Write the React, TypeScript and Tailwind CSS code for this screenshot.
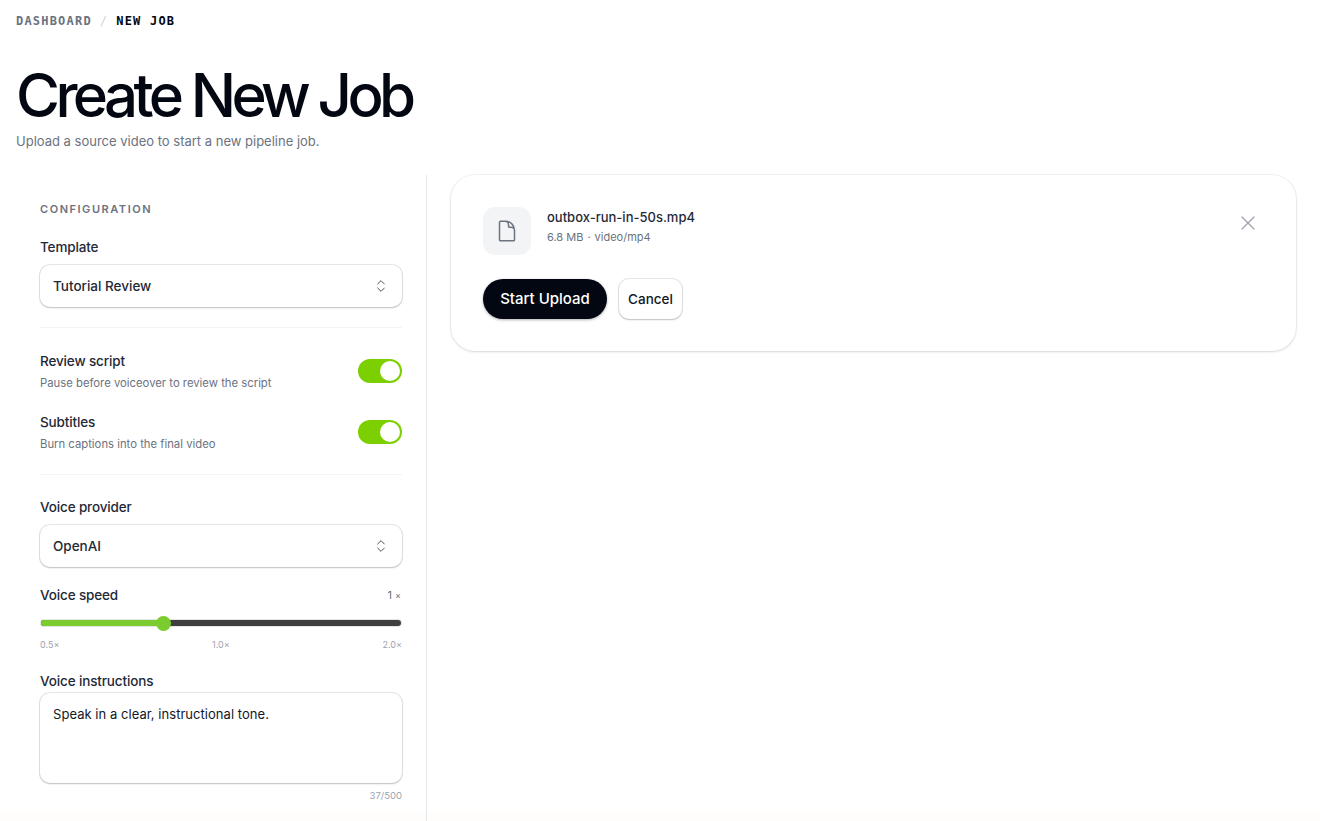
import { ChevronsUpDown, X } from "lucide-react";
import { HiOutlineDocument } from "react-icons/hi2";

const fieldLabel = "text-[13.5px] leading-[20px] font-medium text-[#1f2937] tracking-[-0.01em]";
const ringShadow = "shadow-[0_0_0_1px_rgba(0,0,0,0.09),0_1px_2px_rgba(0,0,0,0.18)]";

function Toggle() {
  return (
    <div className="flex h-6 w-[44px] shrink-0 items-center justify-end rounded-full bg-[#7ccf00] p-[2px]">
      <div className="h-5 w-5 rounded-full bg-white" />
    </div>
  );
}

function SelectBox({ value }: { value: string }) {
  return (
    <div className={`flex h-[42px] items-center justify-between rounded-[10px] bg-white pl-[13px] pr-[13px] ${ringShadow}`}>
      <span className="text-[13.5px] font-medium text-[#1f2937]">{value}</span>
      <ChevronsUpDown className="h-4 w-4 text-[#4b5563]" strokeWidth={1.5} />
    </div>
  );
}

function ToggleRow({ title, hint }: { title: string; hint: string }) {
  return (
    <div className="flex items-center justify-between">
      <div>
        <div className={fieldLabel}>{title}</div>
        <div className="mt-[4px] text-[11.3px] leading-[16px] text-[#6b7280]">{hint}</div>
      </div>
      <Toggle />
    </div>
  );
}

export default function App() {
  return (
    <div className="flex h-[821px] flex-col overflow-hidden bg-[linear-gradient(to_bottom,#ffffff_98.8%,#fefdfb_98.8%)] font-['Inter',sans-serif] antialiased">
      <div className="px-4 pt-[14px]">
        <div className="flex items-center gap-[8px] font-['DejaVu_Sans_Mono',monospace] text-[12px] leading-[14px] font-bold tracking-[0.1em]">
          <span className="text-[#6b7280]">DASHBOARD</span>
          <span className="font-normal text-[#d1d5db]">/</span>
          <span className="text-[#030712]">NEW JOB</span>
        </div>
        <h1 className="mt-[37px] text-[60px] leading-[60px] font-medium tracking-[-0.077em] text-[#030712]">
          Create New Job
        </h1>
        <p className="mt-[6px] text-[13px] leading-[20px] text-[#6b7280]">
          Upload a source video to start a new pipeline job.
        </p>
      </div>

      <div className="mt-[24px] flex min-h-0 flex-1">
        <aside className="w-[427px] shrink-0 border-r border-[#e5e7eb] pl-[40px] pr-[24px] pt-[26px]">
          <div className="text-[11px] leading-[16px] font-semibold tracking-[0.14em] text-[#6b7280]">CONFIGURATION</div>
          <div className={`mt-[20px] ${fieldLabel}`}>Template</div>
          <div className="mt-[8px]">
            <SelectBox value="Tutorial Review" />
          </div>
          <div className="mb-[23px] mt-[20px] h-px bg-[#f3f4f6]" />
          <div className="flex flex-col gap-[21px]">
            <ToggleRow title="Review script" hint="Pause before voiceover to review the script" />
            <ToggleRow title="Subtitles" hint="Burn captions into the final video" />
          </div>
          <div className="mb-[22px] mt-[22px] h-px bg-[#f3f4f6]" />
          <div className={fieldLabel}>Voice provider</div>
          <div className="mt-[8px]">
            <SelectBox value="OpenAI" />
          </div>
          <div className="mt-[18px] flex items-center justify-between">
            <span className={fieldLabel}>Voice speed</span>
            <span className="mr-px mt-px flex items-center gap-[3px] text-[11px] text-[#6b7280]">
              1<span className="text-[9px]">×</span>
            </span>
          </div>
          <div className="relative mx-px mt-[15px] flex h-[6px] items-center rounded-full bg-[#3f3f3f] shadow-[0_0_0_1px_rgba(0,0,0,0.1)]">
            <div className="h-full w-[122px] rounded-l-full bg-[#7bcd2f]" />
            <div className="absolute left-[115px] h-[15px] w-[15px] rounded-full bg-[#7bcd2f]" />
          </div>
          <div className="mt-[12px] flex justify-between text-[9px] leading-[14px] text-[#9ca3af]">
            <span>0.5×</span>
            <span>1.0×</span>
            <span>2.0×</span>
          </div>
          <div className={`mt-[19px] ${fieldLabel}`}>Voice instructions</div>
          <div className={`mt-[2px] h-[90px] rounded-[10px] bg-white px-[13px] py-[11px] text-[13px] leading-[20px] text-[#111827] tracking-[0.04px] ${ringShadow}`}>
            Speak in a clear, instructional tone.
          </div>
          <div className="mt-[6px] text-right text-[9.5px] leading-[14px] text-[#9ca3af]">37/500</div>
        </aside>

        <main className="min-w-0 flex-1 pl-[24px] pr-[24px]">
          <div className="rounded-[24px] bg-white p-8 shadow-[0_0_0_1px_rgba(0,0,0,0.04),0_1px_3px_rgba(0,0,0,0.12)]">
            <div className="flex items-start justify-between">
              <div className="flex items-start gap-4">
                <div className="flex h-[48px] w-[48px] items-center justify-center rounded-[12px] bg-[#f3f4f6]">
                  <HiOutlineDocument className="h-6 w-6 text-[#6b7280]" />
                </div>
                <div>
                  <div className="text-[13px] leading-[20px] font-medium text-[#1f2937]">outbox-run-in-50s.mp4</div>
                  <div className="mt-[2px] flex gap-[4px] text-[11px] leading-[16px] text-[#6b7280]">
                    <span>6.8 MB</span>
                    <span>·</span>
                    <span>video/mp4</span>
                  </div>
                </div>
              </div>
              <X className="mr-[4px] mt-[4px] h-6 w-6 text-[#9ca3af]" strokeWidth={1.25} />
            </div>
            <div className="mt-[24px] flex items-center gap-[12px]">
              <div className="flex h-[40px] w-[124px] items-center justify-center rounded-full bg-[#030712] pt-px text-[15px] font-medium text-white shadow-[0_1px_3px_rgba(0,0,0,0.3)]">
                Start Upload
              </div>
              <div className={`flex h-[40px] w-[63px] items-center justify-center rounded-[10px] bg-white text-[13.5px] font-medium text-[#111827] ${ringShadow}`}>
                Cancel
              </div>
            </div>
          </div>
        </main>
      </div>
    </div>
  );
}
